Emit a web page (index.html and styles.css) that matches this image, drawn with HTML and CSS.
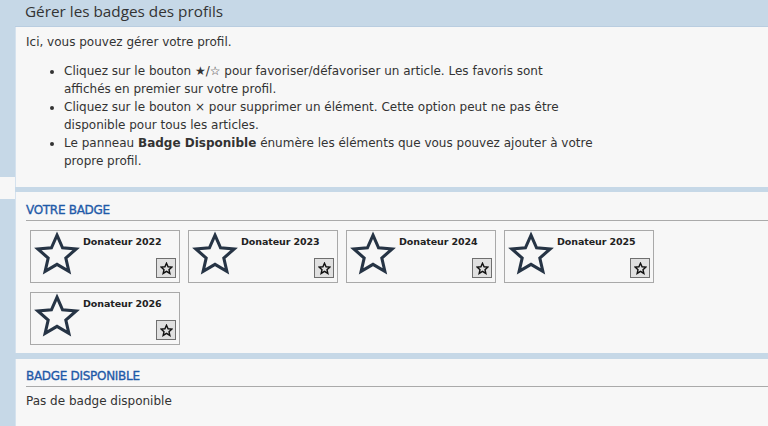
FILE: index.html
```html
<!DOCTYPE html>
<html lang="fr">
<head>
<meta charset="utf-8">
<link rel="stylesheet" href="styles.css">
</head>
<body>
<div class="page">
  <aside class="side"><div class="side-gap"></div></aside>
  <main class="main">
    <h1 class="title">Gérer les badges des profils</h1>
    <section class="panel intro">
      <p>Ici, vous pouvez gérer votre profil.</p>
      <ul>
        <li class="narrow">Cliquez sur le bouton ★/☆ pour favoriser/défavoriser un article. Les favoris sont affichés en premier sur votre profil.</li>
        <li>Cliquez sur le bouton × pour supprimer un élément. Cette option peut ne pas être disponible pour tous les articles.</li>
        <li>Le panneau <b>Badge Disponible</b> énumère les éléments que vous pouvez ajouter à votre propre profil.</li>
      </ul>
    </section>
    <section class="panel badges">
      <h2 class="sec">VOTRE BADGE</h2>
      <div class="grid">
        <div class="card"><svg class="big" viewBox="0 0 24 24"><path d="M12 2.2l2.9 6.6 7.1.6-5.4 4.7 1.6 7-6.2-3.7-6.2 3.7 1.6-7L2 9.4l7.1-.6z"/></svg><span class="name">Donateur 2022</span><button class="fav"><svg viewBox="0 0 24 24"><path d="M12 2.2l2.9 6.6 7.1.6-5.4 4.7 1.6 7-6.2-3.7-6.2 3.7 1.6-7L2 9.4l7.1-.6z"/></svg></button></div>
        <div class="card"><svg class="big" viewBox="0 0 24 24"><path d="M12 2.2l2.9 6.6 7.1.6-5.4 4.7 1.6 7-6.2-3.7-6.2 3.7 1.6-7L2 9.4l7.1-.6z"/></svg><span class="name">Donateur 2023</span><button class="fav"><svg viewBox="0 0 24 24"><path d="M12 2.2l2.9 6.6 7.1.6-5.4 4.7 1.6 7-6.2-3.7-6.2 3.7 1.6-7L2 9.4l7.1-.6z"/></svg></button></div>
        <div class="card"><svg class="big" viewBox="0 0 24 24"><path d="M12 2.2l2.9 6.6 7.1.6-5.4 4.7 1.6 7-6.2-3.7-6.2 3.7 1.6-7L2 9.4l7.1-.6z"/></svg><span class="name">Donateur 2024</span><button class="fav"><svg viewBox="0 0 24 24"><path d="M12 2.2l2.9 6.6 7.1.6-5.4 4.7 1.6 7-6.2-3.7-6.2 3.7 1.6-7L2 9.4l7.1-.6z"/></svg></button></div>
        <div class="card"><svg class="big" viewBox="0 0 24 24"><path d="M12 2.2l2.9 6.6 7.1.6-5.4 4.7 1.6 7-6.2-3.7-6.2 3.7 1.6-7L2 9.4l7.1-.6z"/></svg><span class="name">Donateur 2025</span><button class="fav"><svg viewBox="0 0 24 24"><path d="M12 2.2l2.9 6.6 7.1.6-5.4 4.7 1.6 7-6.2-3.7-6.2 3.7 1.6-7L2 9.4l7.1-.6z"/></svg></button></div>
        <div class="card"><svg class="big" viewBox="0 0 24 24"><path d="M12 2.2l2.9 6.6 7.1.6-5.4 4.7 1.6 7-6.2-3.7-6.2 3.7 1.6-7L2 9.4l7.1-.6z"/></svg><span class="name">Donateur 2026</span><button class="fav"><svg viewBox="0 0 24 24"><path d="M12 2.2l2.9 6.6 7.1.6-5.4 4.7 1.6 7-6.2-3.7-6.2 3.7 1.6-7L2 9.4l7.1-.6z"/></svg></button></div>
      </div>
    </section>
    <section class="panel avail">
      <h2 class="sec">BADGE DISPONIBLE</h2>
      <p>Pas de badge disponible</p>
    </section>
  </main>
</div>
</body>
</html>
```
FILE: styles.css
```css
html, body { margin: 0; padding: 0; }
body {
  background: #c6d8e7;
  font-family: "DejaVu Sans", "Liberation Sans", sans-serif;
  color: #333;
  width: 768px;
  height: 426px;
  overflow: hidden;
}
.page { display: flex; }
.side { width: 15px; flex: none; padding-top: 177px; }
.side-gap { height: 22px; background: #f7f7f7; }
.main { flex: 1; min-width: 0; }
.title {
  margin: 0;
  height: 26px;
  padding: 0 0 0 10px;
  font-family: "Open Sans", "DejaVu Sans", sans-serif;
  font-weight: normal;
  font-size: 15.3px;
  line-height: 22px;
  color: #333;
  border-bottom: 1px solid #b9cde0;
}
.panel {
  background: #f7f7f7;
  border-left: 1px solid #d5e2ee;
  font-size: 12px;
  letter-spacing: 0;
}
.intro { padding: 6px 10px 5px 10px; box-sizing: border-box; height: 160px; }
.intro p { margin: 0 0 11px 0; line-height: 18px; }
.intro ul { margin: 0; padding-left: 38px; width: 545px; }
.intro li { line-height: 18px; }
.intro li.narrow { padding-right: 30px; }
.badges { margin-top: 5px; padding: 10px 0 8px 10px; height: 161px; box-sizing: border-box; }
.sec {
  margin: 0;
  font-size: 12px;
  font-weight: normal;
  -webkit-text-stroke: 0.35px #1f5aa8;
  letter-spacing: -0.3px;
  color: #1f5aa8;
  line-height: 17px;
  padding-bottom: 1px;
  border-bottom: 1px solid #aaaaaa;
}
.grid {
  display: flex;
  flex-wrap: wrap;
  gap: 9px 8px;
  padding: 9px 0 0 4px;
  width: 640px;
}
.card {
  position: relative;
  box-sizing: border-box;
  width: 150px;
  height: 53px;
  border: 1px solid #a9a9a9;
  display: flex;
  align-items: flex-start;
}
.big {
  width: 46px;
  height: 46px;
  margin: 0 0 0 3px;
  fill: none;
  stroke: #263445;
  stroke-width: 1.6;
  stroke-linejoin: miter;
}
.name {
  font-size: 9.5px;
  font-weight: bold;
  letter-spacing: -0.1px;
  color: #222;
  margin: 5px 0 0 3px;
}
.fav {
  position: absolute;
  right: 3px;
  bottom: 4px;
  width: 20px;
  height: 20px;
  padding: 0;
  box-sizing: border-box;
  background: #e0e0e0;
  border: 1px solid #6f6f6f;
  display: flex;
  align-items: center;
  justify-content: center;
}
.fav svg { width: 13px; height: 13px; fill: none; stroke: #111; stroke-width: 2.6; }
.avail { margin-top: 6px; padding: 9px 0 0 10px; height: 80px; box-sizing: border-box; }
.avail p { margin: 6px 0 0 0; line-height: 16px; }
```
